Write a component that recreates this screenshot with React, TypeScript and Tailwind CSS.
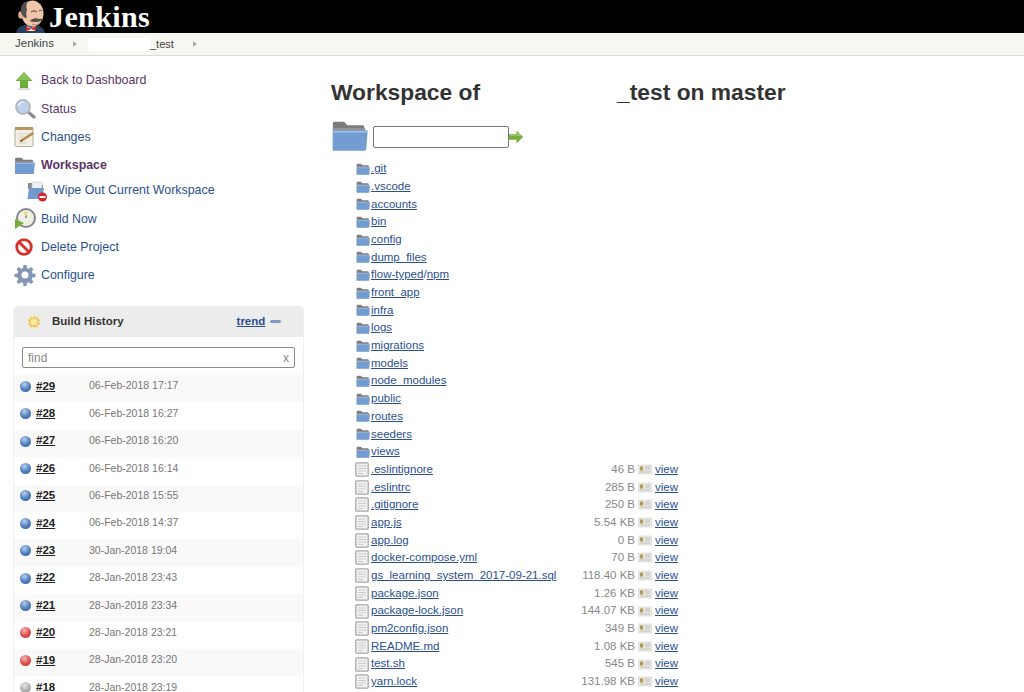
import React from "react";

const folders = [".git", ".vscode", "accounts", "bin", "config", "dump_files", "flow-typed/npm", "front_app", "infra", "logs", "migrations", "models", "node_modules", "public", "routes", "seeders", "views"];

const files = [
  [".eslintignore", "46 B"],
  [".eslintrc", "285 B"],
  [".gitignore", "250 B"],
  ["app.js", "5.54 KB"],
  ["app.log", "0 B"],
  ["docker-compose.yml", "70 B"],
  ["gs_learning_system_2017-09-21.sql", "118.40 KB"],
  ["package.json", "1.26 KB"],
  ["package-lock.json", "144.07 KB"],
  ["pm2config.json", "349 B"],
  ["README.md", "1.08 KB"],
  ["test.sh", "545 B"],
  ["yarn.lock", "131.98 KB"],
];

const builds = [
  ["#29", "06-Feb-2018 17:17", "blue"],
  ["#28", "06-Feb-2018 16:27", "blue"],
  ["#27", "06-Feb-2018 16:20", "blue"],
  ["#26", "06-Feb-2018 16:14", "blue"],
  ["#25", "06-Feb-2018 15:55", "blue"],
  ["#24", "06-Feb-2018 14:37", "blue"],
  ["#23", "30-Jan-2018 19:04", "blue"],
  ["#22", "28-Jan-2018 23:43", "blue"],
  ["#21", "28-Jan-2018 23:34", "blue"],
  ["#20", "28-Jan-2018 23:21", "red"],
  ["#19", "28-Jan-2018 23:20", "red"],
  ["#18", "28-Jan-2018 23:19", "grey"],
];

function Butler() {
  return (
    <svg width="30" height="33" viewBox="0 0 30 33">
      <path d="M0 33c1-5 4-7 9-8h11c4 1 8 3 9 8z" fill="#26405f" />
      <path d="M11 26l4 2 4-2v5h-8z" fill="#f3efe6" />
      <path d="M10 26.500l5 2 5-2.500v5l-5-2-5 2.500z" fill="#c9302a" />
      <ellipse cx="16.500" cy="13.500" rx="11" ry="13" fill="#f0c6ab" />
      <ellipse cx="5" cy="15" rx="2.800" ry="3.800" fill="#e2ad90" />
      <path d="M5 12C4 6 7 2 12 1c-2 3-2 6-1 9-1 2-1 5 0 8-3 0-5-2-6-6z" fill="#55504c" />
      <path d="M15 12c2-1.500 4-1.500 6 0M23 11c1-.8 2-.8 3 0" stroke="#4a3a32" strokeWidth="1" fill="none" />
      <path d="M14 21c2-3 7-3.500 9-2 2-.5 3 0 4 1-3 2-10 3-13 1z" fill="#5a5048" />
      <path d="M16 24c2 1 5 1 7 0" stroke="#b47a62" strokeWidth="0.900" fill="none" />
    </svg>
  );
}

function UpArrow() {
  return (
    <svg width="20" height="20" viewBox="0 0 20 20" className="ml-[2px]">
      <ellipse cx="9" cy="18" rx="7" ry="1.500" fill="#dcdcdc" />
      <path d="M9 1l8.500 9H13v7H5v-7H.5z" fill="#6cac3a" />
      <path d="M9 2l6.500 7h-13z" fill="#8cc45c" />
    </svg>
  );
}

function Magnifier() {
  return (
    <svg width="22" height="22" viewBox="0 0 22 22" className="ml-[1px]">
      <path d="M13 13l7 6" stroke="#8b8b92" strokeWidth="3.200" strokeLinecap="round" />
      <circle cx="9" cy="9" r="7" fill="#bcd2ec" stroke="#b4b8be" strokeWidth="1.800" />
      <path d="M4.500 8a4.500 4.500 0 0 1 5-4" stroke="#eef4fb" strokeWidth="1.400" fill="none" />
    </svg>
  );
}

function Notepad() {
  return (
    <svg width="22" height="22" viewBox="0 0 22 22" className="ml-[1px]">
      <rect x="1" y="1.500" width="18" height="19" rx="1.500" fill="#f5f1e2" stroke="#b0aca2" />
      <rect x="1" y="1" width="18" height="3" fill="#b39a63" />
      <path d="M4 8h12M4 11h12M4 14h8M4 17h9" stroke="#d2d2d2" />
      <path d="M6 16l2.500-.8L20 8l-1.500-2L7 13.500z" fill="#b58a4a" />
      <path d="M6 16l.9-2.500 1.700 1.700z" fill="#6a4a2a" />
    </svg>
  );
}

function FolderIcon({ size = 20, className = "" }: { size?: number; className?: string }) {
  return (
    <svg width={size} height={size} viewBox="0 0 20 20" className={className}>
      <path d="M1 3.500C1 3 1.400 2.500 2 2.500h5l2 2h8c.6 0 1 .4 1 1V7H1z" fill="#7c7c7c" />
      <path d="M1 6h17.500v11.500H1z" fill="#959595" />
      <path d="M1 8c0-.5.4-.8 1-.8h17c.5 0 .8.3.8.8L19 17.500c0 .4-.4.7-.8.7H1.500c-.4 0-.7-.3-.6-.7z" fill="#739dd0" />
      <path d="M1.500 8h17.800" stroke="#a4c2e6" strokeWidth="0.800" />
    </svg>
  );
}

function WipeIcon() {
  return (
    <svg width="22" height="22" viewBox="0 0 22 22">
      <path d="M2 3h7l2 2h6v4H2z" fill="#8a8a8a" />
      <path d="M6 2h10v8H6z" fill="#f0f0f0" stroke="#c8c8c8" strokeWidth="0.600" />
      <path d="M3 8h15l-2 11H1.500z" fill="#7099cc" />
      <circle cx="16.500" cy="17" r="4.500" fill="#d6222a" />
      <rect x="13.500" y="16" width="6" height="2" fill="#fff" />
    </svg>
  );
}

function ClockIcon() {
  return (
    <svg width="22" height="22" viewBox="0 0 22 22" className="ml-[1px]">
      <circle cx="12" cy="10" r="9" fill="#f0efe6" stroke="#85858c" strokeWidth="2" />
      <path d="M12 4v6" stroke="#555" strokeWidth="1.200" />
      <path d="M9 3l5 2-3 4z" fill="#efe08a" />
      <path d="M1 11l9 4-9 6z" fill="#72b03a" />
    </svg>
  );
}

function BlockedIcon() {
  return (
    <svg width="20" height="20" viewBox="0 0 20 20" className="ml-[2px]">
      <circle cx="9" cy="10" r="7.300" fill="#fff" stroke="#d4322c" strokeWidth="2.800" />
      <path d="M4 5l10 10" stroke="#d4322c" strokeWidth="2.800" />
    </svg>
  );
}

function GearIcon() {
  return (
    <svg width="22" height="22" viewBox="0 0 22 22" className="ml-[1px]">
      <path
        d="M9.500 1h3l.5 3 1.800.8 2.500-1.700 2.100 2.100-1.700 2.500.8 1.800 3 .5v3l-3 .5-.8 1.800 1.700 2.500-2.100 2.100-2.500-1.700-1.800.8-.5 3h-3l-.5-3-1.800-.8-2.500 1.700-2.100-2.100 1.700-2.500-.8-1.800-3-.5v-3l3-.5.8-1.800-1.700-2.500 2.100-2.100 2.500 1.700L9 4z"
        fill="#8496b3"
      />
      <circle cx="11" cy="11" r="3.500" fill="#fff" />
    </svg>
  );
}

function SunIcon() {
  return (
    <svg width="14" height="14" viewBox="0 0 16 16">
      <path d="M8 0l1.500 3L12.500 1.500l-.2 3.300 3.200.2L13.500 8l2 3-3.200.2.200 3.300L9.500 13 8 16l-1.500-3-3 1.500.2-3.300-3.200-.2 2-3-2-3 3.200-.2-.2-3.300 3 1.500z" fill="#f1c95c" />
      <circle cx="8" cy="8" r="3.800" fill="#fbeaa4" />
    </svg>
  );
}

function Ball({ color }: { color: string }) {
  const cls =
    color === "blue"
      ? "bg-[radial-gradient(circle_at_40%_30%,#b9cfea,#4a7cbd_55%,#2f5c9c)]"
      : color === "red"
        ? "bg-[radial-gradient(circle_at_40%_30%,#f2b4b4,#dc4a4a_55%,#c23535)]"
        : "bg-[radial-gradient(circle_at_40%_30%,#e4e4e4,#b0b0b0_55%,#949494)]";
  return <span className={`block h-[11px] w-[11px] rounded-full ${cls}`} />;
}

function SideItem({ icon, label, visited, bold }: { icon: React.ReactNode; label: string; visited?: boolean; bold?: boolean }) {
  return (
    <div className="flex h-[28.3px] items-center">
      <span className="flex w-[28px] justify-start">{icon}</span>
      <span className={`text-[12.4px] ${visited ? "text-[#5c3566]" : "text-[#2a5090]"} ${bold ? "font-bold" : ""}`}>{label}</span>
    </div>
  );
}

function FileRow({ name, size }: { name: string; size: string }) {
  return (
    <div className="flex h-[17.69px] items-center">
      <svg width="14" height="15" viewBox="0 0 14 15" className="-ml-[1px] mr-[2px] shrink-0">
        <rect x="0.800" y="0.800" width="12.400" height="13.400" rx="1" fill="#f2f2f2" stroke="#a8a8a8" strokeWidth="1.300" />
        <path d="M3 4h8M3 6.500h8M3 9h8M3 11.500h5" stroke="#cccccc" />
      </svg>
      <a className="w-[190px] shrink-0 text-[#2a5090] underline">{name}</a>
      <span className="w-[74px] text-right text-[#888]">{size}</span>
      <svg width="14" height="11" viewBox="0 0 14 11" className="ml-[3px] shrink-0">
        <rect x="0" y="0.500" width="14" height="10" fill="#e4e4e0" />
        <rect x="2" y="2.500" width="3" height="4" fill="#b09a50" />
        <path d="M7 3h5M7 5h5M2 8h10" stroke="#c4c4c0" />
      </svg>
      <a className="ml-[3px] text-[#2a5090] underline">view</a>
    </div>
  );
}

export default function App() {
  return (
    <div className="h-[692px] w-[1024px] overflow-hidden bg-white font-['Liberation_Sans',Arial,sans-serif] text-[11.5px]">
      <div className="flex h-[33px] items-end bg-black pl-[16px]">
        <Butler />
        <span className="ml-[3px] self-center font-['Liberation_Serif',serif] text-[30px] font-bold tracking-[0.4px] text-white">Jenkins</span>
      </div>
      <div className="flex h-[23px] items-center border-b border-[#dcdcd6] bg-[#f6f7f1] pl-[15px] text-[#444]">
        <span>Jenkins</span>
        <span className="ml-[19px] h-0 w-0 border-y-[3.500px] border-l-[4px] border-y-transparent border-l-[#aaa]" />
        <span className="ml-[11px] h-[13px] w-[62px] bg-white" />
        <span className="text-[11px]">_test</span>
        <span className="ml-[19px] h-0 w-0 border-y-[3.500px] border-l-[4px] border-y-transparent border-l-[#aaa]" />
      </div>

      <div className="flex">
        <div className="w-[331px] shrink-0 pl-[13px] pt-[10.5px]">
          <SideItem icon={<UpArrow />} label="Back to Dashboard" visited />
          <SideItem icon={<Magnifier />} label="Status" visited />
          <SideItem icon={<Notepad />} label="Changes" />
          <SideItem icon={<FolderIcon size={21} className="ml-[1px]" />} label="Workspace" visited bold />
          <div className="mb-[3px] flex h-[22px] items-center pl-[13px]">
            <span className="flex w-[27px]"><WipeIcon /></span>
            <span className="text-[12.4px] text-[#2a5090]">Wipe Out Current Workspace</span>
          </div>
          <SideItem icon={<ClockIcon />} label="Build Now" />
          <SideItem icon={<BlockedIcon />} label="Delete Project" />
          <SideItem icon={<GearIcon />} label="Configure" />

          <div className="mt-[16.5px] w-[291px] rounded-t-[4px] border-x border-[#f0f0f0]">
            <div className="flex h-[31px] items-center rounded-t-[4px] bg-[#ececec] pl-[13px]">
              <SunIcon />
              <span className="ml-[11px] font-bold text-[#333]">Build History</span>
              <a className="ml-[113px] w-[29px] font-bold text-[#2a5090] underline">trend</a>
              <span className="ml-[4px] h-[3px] w-[11px] rounded-sm bg-[#7d9cc4]" />
            </div>
            <div className="px-[8px] pb-[7px] pt-[10px]">
              <div className="flex h-[21px] items-center justify-between rounded-[2px] border border-[#8a8a8a] bg-white px-[5px] text-[12px] text-[#888]">
                <span>find</span>
                <span>x</span>
              </div>
            </div>
            {builds.map(([id, date, color], i) => (
              <div key={id} className={`flex h-[27.4px] items-center pb-[5px] pl-[6px] ${i % 2 === 0 ? "bg-[#f9f9f9]" : "bg-white"}`}>
                <Ball color={color} />
                <a className={`ml-[5px] w-[53px] font-bold text-[#222] ${i === 11 ? "" : "underline"}`}>{id}</a>
                <span className="text-[10.5px] text-[#777]">{date}</span>
              </div>
            ))}
          </div>
        </div>

        <div>
          <h1 className="mt-[23px] flex h-[26px] items-center text-[22.8px] font-bold leading-none text-[#333]">
            <span>Workspace of</span>
            <span className="w-[137px]" />
            <span>_test on master</span>
          </h1>
          <div className="mt-[15px] flex h-[34px] items-center">
            <FolderIcon size={37} className="mt-[-3px] shrink-0" />
            <div className="ml-[5px] h-[22px] w-[136px] rounded-[2px] border border-[#777] bg-white" />
            <svg width="15" height="14" viewBox="0 0 16 14">
              <path d="M0 4h8V0l7 7-7 7v-4H0z" fill="#76ad3c" />
              <path d="M1 5h8V2l4 4H1z" fill="#a3cc70" />
            </svg>
          </div>
          <div className="ml-[25px] mt-[6px]">
            {folders.map((f) => (
              <div key={f} className="flex h-[17.69px] items-center">
                <FolderIcon size={14} className="mr-[1px] shrink-0" />
                {f === "flow-typed/npm" ? (
                  <span className="text-[#2a5090]"><a className="underline">flow-typed</a>/<a className="underline">npm</a></span>
                ) : (
                  <a className="text-[#2a5090] underline">{f}</a>
                )}
              </div>
            ))}
            {files.map(([n, s]) => (
              <FileRow key={n} name={n} size={s} />
            ))}
          </div>
        </div>
      </div>
    </div>
  );
}
